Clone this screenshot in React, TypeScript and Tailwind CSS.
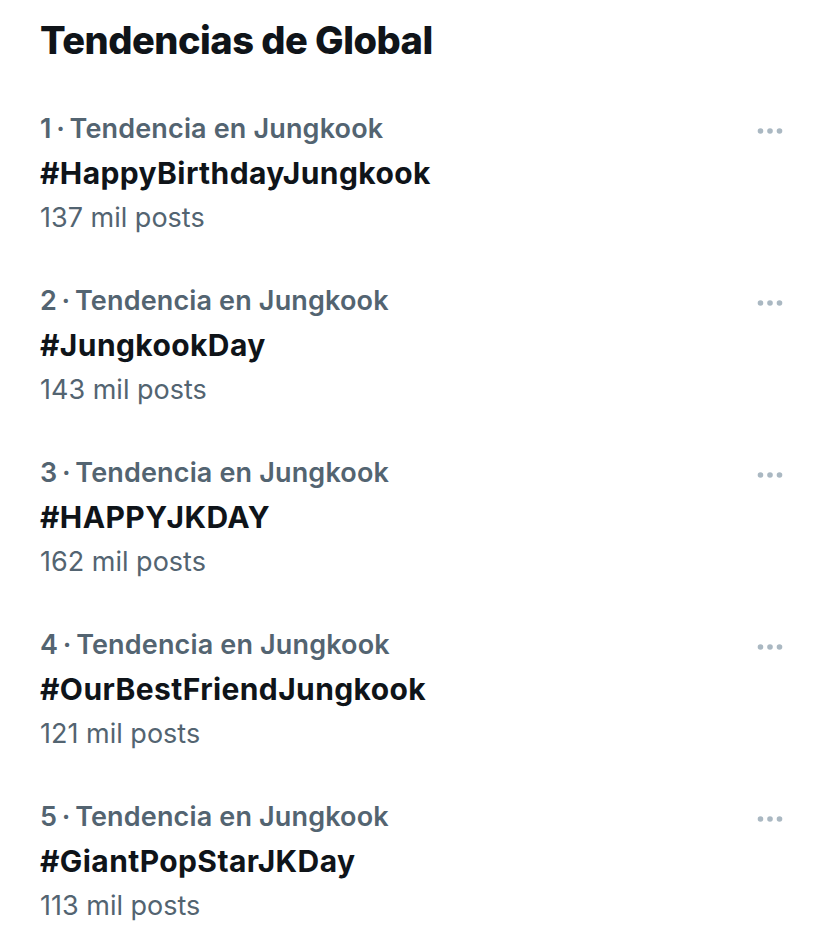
const trends = [
  { rank: 1, tag: "#HappyBirthdayJungkook", posts: "137 mil posts" },
  { rank: 2, tag: "#JungkookDay", posts: "143 mil posts" },
  { rank: 3, tag: "#HAPPYJKDAY", posts: "162 mil posts" },
  { rank: 4, tag: "#OurBestFriendJungkook", posts: "121 mil posts" },
  { rank: 5, tag: "#GiantPopStarJKDay", posts: "113 mil posts" },
]

function Dots() {
  return (
    <svg width="26" height="8" viewBox="0 0 26 8" className="mt-[20px]">
      <circle cx="3.5" cy="4" r="2.8" fill="#aab8c2" />
      <circle cx="13" cy="4" r="2.8" fill="#aab8c2" />
      <circle cx="22.5" cy="4" r="2.8" fill="#aab8c2" />
    </svg>
  )
}

export default function App() {
  return (
    <div className="w-[828px] h-[950px] bg-white px-10 pt-[18px] font-['Inter',sans-serif]">
      <h2 className="text-[38px] leading-[44px] font-extrabold text-[#0f1419] tracking-[-0.5px]">
        Tendencias de Global
      </h2>
      <div className="mt-[45px] flex flex-col gap-[39px]">
        {trends.map((t) => (
          <div key={t.rank} className="flex justify-between pr-[5px]">
            <div className="flex flex-col">
              <span className="text-[27px] leading-[44px] font-semibold text-[#536471] tracking-[0.15px]">
                {t.rank}{"\u2009·\u2009"}Tendencia en Jungkook
              </span>
              <span className="text-[30px] leading-[44px] font-bold text-[#0f1419] tracking-[0.4px]">{t.tag}</span>
              <span className="text-[27px] leading-[45px] text-[#536471]">{t.posts}</span>
            </div>
            <Dots />
          </div>
        ))}
      </div>
    </div>
  )
}
